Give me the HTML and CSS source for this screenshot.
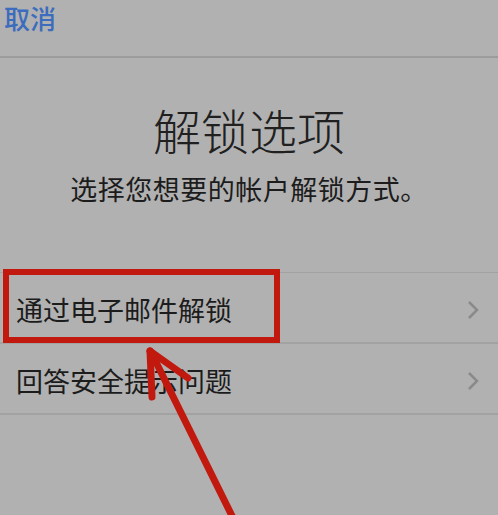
FILE: index.html
```html
<!doctype html>
<html lang="zh-CN">
<head>
  <meta charset="UTF-8" />
  <meta name="viewport" content="width=device-width, initial-scale=1.0" />
  <title>解锁选项</title>
  <link rel="stylesheet" href="styles.css">
</head>
<body>
  <main class="screen">
    <header class="navbar">
      <button class="cancel">取消</button>
    </header>

    <section class="intro">
      <h1>解锁选项</h1>
      <p class="subtitle">选择您想要的帐户解锁方式。</p>
    </section>

    <ul class="options">
      <li class="option">
        <span>通过电子邮件解锁</span>
        <svg class="chevron" viewBox="0 0 12 20" width="12" height="20"><polyline points="2,2 10,10 2,18" /></svg>
      </li>
      <li class="option">
        <span>回答安全提示问题</span>
        <svg class="chevron" viewBox="0 0 12 20" width="12" height="20"><polyline points="2,2 10,10 2,18" /></svg>
      </li>
    </ul>

    <!-- annotation drawn over the screenshot -->
    <svg class="markup" viewBox="0 0 498 515" width="498" height="515">
      <rect x="6" y="272" width="271" height="68" />
      <line x1="151" y1="352" x2="236" y2="524" />
      <line x1="150" y1="351" x2="152" y2="397" />
      <line x1="150" y1="351" x2="188" y2="378" />
    </svg>
  </main>
</body>
</html>
```

FILE: styles.css
```css
:root {
  --bg: #b1b1b1;
  --ink: #1c1c1c;
  --blue: #3b6cbd;
  --line: #a2a2a2;
  --chev: #8a8a8a;
  --mark: #c2190f;
}

* { box-sizing: border-box; }

body {
  margin: 0;
  background: var(--bg);
  color: var(--ink);
  font-family: "Noto Sans CJK SC", "Noto Sans", sans-serif;
}

.screen {
  position: relative;
  width: 498px;
  height: 515px;
  overflow: hidden;
}

.navbar {
  height: 58px;
  border-bottom: 2px solid #9c9c9c;
  display: flex;
  align-items: flex-start;
  padding: 5px 0 0 4px;
}

.cancel {
  border: 0;
  background: none;
  padding: 0;
  font: inherit;
  font-size: 26px;
  line-height: 26px;
  font-weight: 500;
  color: var(--blue);
}

.intro {
  text-align: center;
}

h1 {
  margin: 47px 0 0;
  font-size: 48px;
  line-height: 48px;
  font-weight: 300;
  color: #202020;
}

.subtitle {
  margin: 22px 0 0;
  font-size: 27px;
  line-height: 27px;
  letter-spacing: 0.5px;
}

.options {
  list-style: none;
  margin: 70px 0 0;
  padding: 0;
  border-top: 1px solid var(--line);
}

.option {
  height: 71px;
  display: flex;
  align-items: center;
  justify-content: space-between;
  padding: 4px 19px 0 16px;
  border-bottom: 2px solid var(--line);
  font-size: 27px;
}

.chevron polyline {
  fill: none;
  stroke: var(--chev);
  stroke-width: 2.5;
}

.markup {
  position: absolute;
  left: 0;
  top: 0;
  pointer-events: none;
}

.markup rect,
.markup line {
  fill: none;
  stroke: var(--mark);
  stroke-width: 6;
}

.markup line {
  stroke-width: 7;
  stroke-linecap: round;
}
```
